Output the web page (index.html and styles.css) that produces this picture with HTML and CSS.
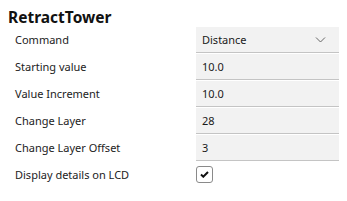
FILE: index.html
```html
<!DOCTYPE html>
<html lang="en">
<head>
    <meta charset="UTF-8">
    <title>RetractTower</title>
    <link rel="stylesheet" href="styles.css">
</head>
<body>

<div class="panel">
    <div class="title">RetractTower</div>
    <div class="settings">
        <div class="label">Command</div>
        <div class="field select">
            <span>Distance</span>
            <svg class="chevron" width="11" height="6" viewBox="0 0 11 6"><path d="M1 0.5 L5.5 5 L10 0.5" fill="none" stroke="#666" stroke-width="1"/></svg>
        </div>

        <div class="label">Starting value</div>
        <div class="field">10.0</div>

        <div class="label">Value Increment</div>
        <div class="field">10.0</div>

        <div class="label">Change Layer</div>
        <div class="field">28</div>

        <div class="label">Change Layer Offset</div>
        <div class="field">3</div>

        <div class="label">Display details on LCD</div>
        <div class="check-cell">
            <div class="checkbox">
                <svg width="9" height="7" viewBox="0 0 9 7"><path d="M1 3.5 L3.3 5.7 L8 1" fill="none" stroke="#111" stroke-width="2"/></svg>
            </div>
        </div>
    </div>
</div>

</body>
</html>
```

FILE: styles.css
```css
body {
    margin: 0;
    background-color: white;
    font-family: "Noto Sans", "Open Sans", sans-serif;
    color: #222;
}
.panel {
    padding: 8px 8px 0 8px;
}
.title {
    font-size: 15.5px;
    font-weight: bold;
    line-height: 19px;
    color: #111;
}
.settings {
    display: grid;
    grid-template-columns: 181px 143px;
    grid-auto-rows: 26px;
    row-gap: 1px;
    padding-left: 7px;
    font-size: 11px;
}
.label {
    line-height: 26px;
    white-space: nowrap;
}
.field {
    background-color: #f2f2f2;
    border-bottom: 1px solid #c4c4c4;
    line-height: 25px;
    padding-left: 6px;
    color: #1a1a1a;
}
.select {
    display: flex;
    justify-content: space-between;
    align-items: center;
    padding-right: 13px;
}
.chevron {
    display: block;
}
.check-cell {
    display: flex;
    align-items: center;
    height: 25px;
}
.checkbox {
    width: 15px;
    height: 15px;
    border: 1px solid #8a8a8a;
    border-radius: 3px;
    display: flex;
    align-items: center;
    justify-content: center;
}
```
